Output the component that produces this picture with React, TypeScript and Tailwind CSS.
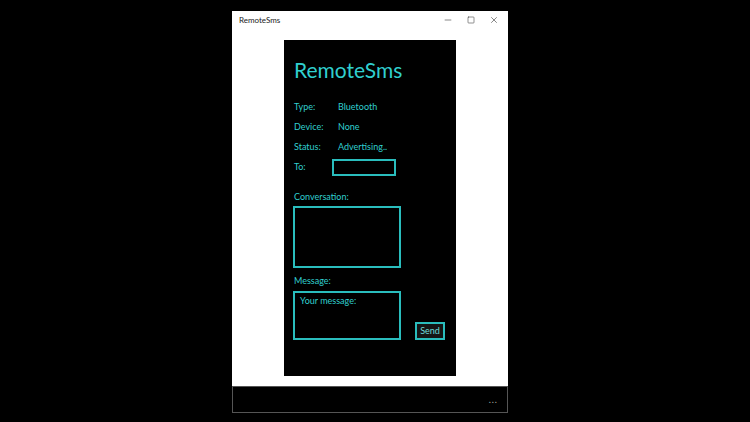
import { Minus, Square, X } from "lucide-react";

const cyan = "text-[#30cfcf]";

function Row({ label, value }: { label: string; value: string }) {
  return (
    <div className="flex items-center h-[20px]">
      <span className="w-[44px]">{label}</span>
      <span>{value}</span>
    </div>
  );
}

export default function App() {
  return (
    <div className="w-[750px] h-[422px] bg-black pl-[232px] pt-[11px] overflow-hidden" style={{ fontFamily: 'Lato, "Open Sans", sans-serif' }}>
      <div className="w-[276px] h-[402px] bg-white flex flex-col">
        {/* title bar */}
        <div className="h-[18px] flex items-center pl-[7px] text-[8px] text-[#222] shrink-0">
          <span className="flex-1">RemoteSms</span>
          <div className="flex items-center gap-[14px] pr-[9px] text-[#222]">
            <Minus size={10} strokeWidth={1.3} />
            <Square size={8} strokeWidth={1.5} />
            <X size={10} strokeWidth={1.3} />
          </div>
        </div>
        {/* content */}
        <div className="flex-1 flex justify-center pt-[11px] pb-[10px]">
          <div className={`w-[172px] bg-black ${cyan} text-[9px] pl-[10px] pt-[19px]`}>
            <div className="text-[21px] leading-none mb-[17px]">RemoteSms</div>
            <Row label="Type:" value="Bluetooth" />
            <Row label="Device:" value="None" />
            <Row label="Status:" value="Advertising.." />
            <div className="flex items-center h-[20px]">
              <span className="w-[38px]">To:</span>
              <div className="w-[64px] h-[17px] border-2 border-[#2abdbd]" />
            </div>
            <div className="mt-[13px] h-[14px] flex items-center">Conversation:</div>
            <div className="mt-[2px] -ml-[1px] w-[108px] h-[62px] border-2 border-[#2abdbd]" />
            <div className="mt-[6px] h-[14px] flex items-center">Message:</div>
            <div className="mt-[3px] -ml-[1px] flex items-end">
              <div className="w-[108px] h-[49px] border-2 border-[#2abdbd] pl-[5px] pt-[1px]">Your message:</div>
              <div className="ml-[14px] w-[30px] h-[18px] border-2 border-[#2abdbd] bg-[#151515] text-[#6fdada] flex items-center justify-center">Send</div>
            </div>
          </div>
        </div>
        {/* app bar */}
        <div className="h-[27px] bg-black border border-[#555] flex items-center justify-end pr-[9px] shrink-0">
          <span className="text-[#aaa] text-[9px] tracking-[1px] leading-none">...</span>
        </div>
      </div>
    </div>
  );
}
